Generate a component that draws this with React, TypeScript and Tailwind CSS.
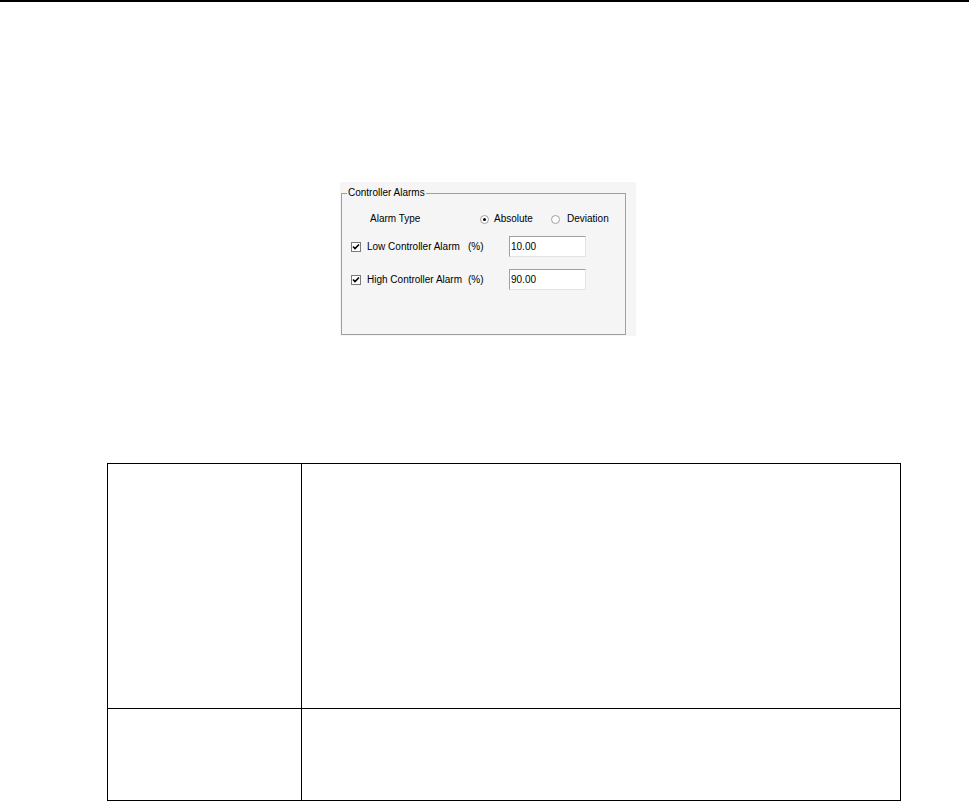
import React from "react";

function Radio({ checked }: { checked?: boolean }) {
  return (
    <span className="flex h-[9px] w-[9px] shrink-0 items-center justify-center rounded-full border border-[#a0a0a0] bg-white">
      {checked && <span className="h-[3px] w-[3px] rounded-full bg-black" />}
    </span>
  );
}

function Check() {
  return (
    <span className="flex h-[10px] w-[10px] shrink-0 items-center justify-center border border-[#7a7a7a] bg-white">
      <svg width="8" height="8" viewBox="0 0 8 8">
        <path d="M1 3.5 L3 5.5 L7 1.5" fill="none" stroke="#000" strokeWidth="1.6" />
      </svg>
    </span>
  );
}

function AlarmRow({ label, value, first }: { label: string; value: string; first?: boolean }) {
  return (
    <div className={first ? "mt-[10px] flex h-[21px] items-center" : "mt-[12px] flex h-[21px] items-center"}>
      <span className="ml-[9px]">
        <Check />
      </span>
      <span className="ml-[6px] w-[101px] whitespace-nowrap">{label}</span>
      <span className="w-[41px]">(%)</span>
      <div className="flex h-[21px] w-[77px] items-center border border-t-[#a0a0a0] border-l-[#a0a0a0] border-r-[#e3e3e3] border-b-[#e3e3e3] bg-white pl-[1px]">
        {value}
      </div>
    </div>
  );
}

export default function App() {
  return (
    <div className="h-[801px] w-[972px] overflow-hidden bg-white font-['Liberation_Sans',Arial,sans-serif] text-black">
      {/* top rule */}
      <div className="h-[2px] w-[969px] bg-black" />

      {/* dialog capture */}
      <div className="ml-[340px] mt-[180px] h-[154px] w-[296px] bg-[#f5f5f5] pl-px pt-[5px] text-[10px] leading-[12px]">
        <fieldset className="h-[148px] w-[285px] border border-[#a0a0a0]">
          <legend className="ml-[5px] px-px leading-[12px]">Controller Alarms</legend>

          <div className="mt-[13px] flex h-[14px] items-center">
            <span className="ml-[28px] w-[110px]">Alarm Type</span>
            <Radio checked />
            <span className="ml-[5px] w-[57px]">Absolute</span>
            <Radio />
            <span className="ml-[7px]">Deviation</span>
          </div>

          <AlarmRow first label="Low Controller Alarm" value="10.00" />
          <AlarmRow label="High Controller Alarm" value="90.00" />
        </fieldset>
      </div>

      {/* table */}
      <div className="ml-[107px] mt-[127px] grid w-[794px] grid-cols-[194px_598px] grid-rows-[245px_91px] border border-black">
        <div className="border-b border-r border-black" />
        <div className="border-b border-black" />
        <div className="border-r border-black" />
        <div />
      </div>
    </div>
  );
}
